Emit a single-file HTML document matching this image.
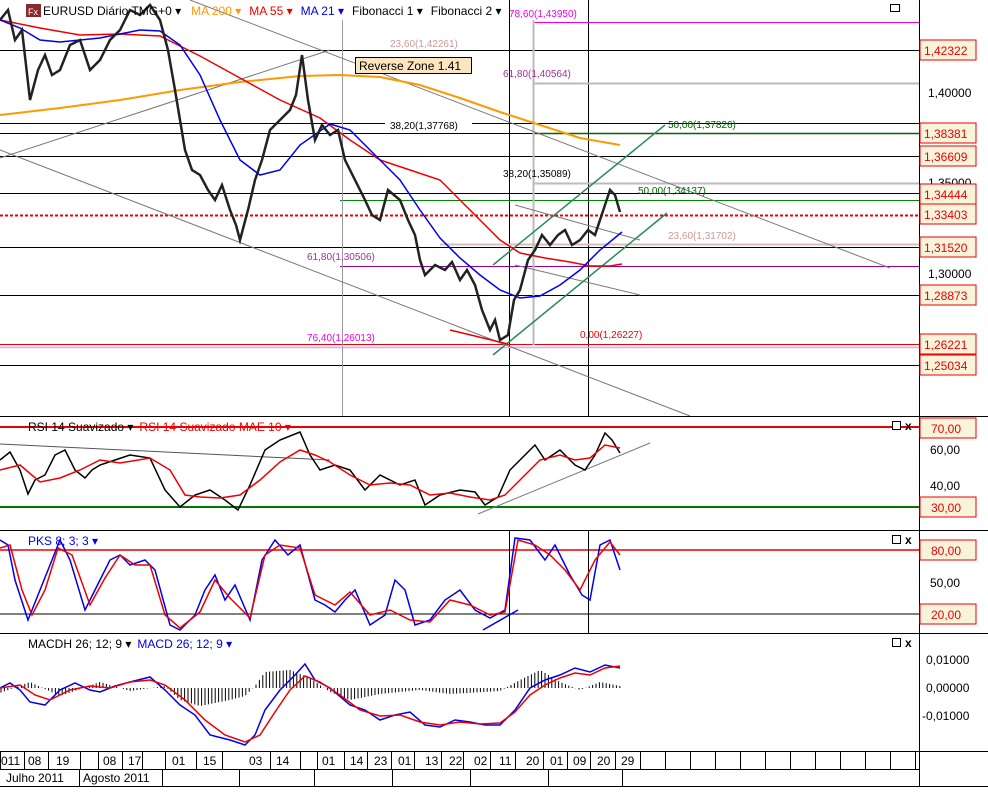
<!DOCTYPE html>
<html><head><meta charset="utf-8">
<style>
html,body{margin:0;padding:0;background:#fff;}
body{width:988px;height:787px;overflow:hidden;font-family:"Liberation Sans",sans-serif;}
svg text{font-family:"Liberation Sans",sans-serif;}
</style></head><body>
<svg id="s" width="988" height="787" viewBox="0 0 988 787" xmlns="http://www.w3.org/2000/svg" font-size="11">
<rect width="988" height="787" fill="#fff"/>
<g stroke="#000" stroke-width="1">
<line x1="0" y1="50.5" x2="919" y2="50.5"/>
<line x1="0" y1="133.5" x2="919" y2="133.5"/>
<line x1="0" y1="156.5" x2="919" y2="156.5"/>
<line x1="0" y1="193.5" x2="919" y2="193.5"/>
<line x1="0" y1="247.5" x2="919" y2="247.5"/>
<line x1="0" y1="295.5" x2="919" y2="295.5"/>
<line x1="0" y1="365.5" x2="919" y2="365.5"/>
<line x1="0" y1="123.5" x2="385" y2="123.5"/>
<line x1="472" y1="123.5" x2="919" y2="123.5"/>
<line x1="509.5" y1="0" x2="509.5" y2="416"/>
<line x1="588.5" y1="0" x2="588.5" y2="416"/>
</g>
<line x1="0" y1="344.5" x2="919" y2="344.5" stroke="#e00" stroke-width="1"/>
<line x1="0" y1="215.5" x2="919" y2="215.5" stroke="#e00" stroke-width="2" stroke-dasharray="3,2"/>
<line x1="533" y1="22.5" x2="919" y2="22.5" stroke="#e0e"/>
<line x1="533" y1="83.5" x2="919" y2="83.5" stroke="#bbb" stroke-width="2"/>
<line x1="533" y1="183.5" x2="919" y2="183.5" stroke="#bbb" stroke-width="2"/>
<line x1="340" y1="200.5" x2="919" y2="200.5" stroke="#080"/>
<line x1="533" y1="133.5" x2="919" y2="133.5" stroke="#060" stroke-width="1.5"/>
<line x1="440" y1="244.5" x2="919" y2="244.5" stroke="#dbb" stroke-width="2"/>
<line x1="340" y1="266.5" x2="919" y2="266.5" stroke="#909"/>
<line x1="0" y1="347.5" x2="919" y2="347.5" stroke="#f9f" stroke-width="1.5"/>
<line x1="342.5" y1="20" x2="342.5" y2="416" stroke="#999"/>
<line x1="533.5" y1="20" x2="533.5" y2="345" stroke="#bbb" stroke-width="2"/>
<g stroke="#777" stroke-width="1" fill="none">
<line x1="0" y1="158" x2="330" y2="50"/>
<line x1="190" y1="0" x2="890" y2="268"/>
<line x1="0" y1="150" x2="690" y2="416"/>
<line x1="515" y1="205" x2="640" y2="240"/>
<line x1="515" y1="265" x2="640" y2="295"/>
</g>
<g stroke="#2a8a5a" stroke-width="1.5">
<line x1="493" y1="265" x2="665" y2="125"/>
<line x1="493" y1="355" x2="667" y2="213"/>
</g>
<polyline fill="none" stroke="#f90" stroke-width="2" points="0,115 60,108 120,100 180,90 240,82 300,76 340,75 380,77 420,85 460,98 500,112 540,125 580,138 620,145"/>
<polyline fill="none" stroke="#e00" stroke-width="1.5" points="0,20 40,28 80,35 120,34 160,36 200,56 240,78 280,100 320,118 350,140 380,160 410,170 440,180 470,210 500,240 520,253 545,258 570,262 590,266 610,266 622,264"/>
<polyline fill="none" stroke="#00e" stroke-width="1.5" points="0,20 20,28 40,40 60,42 100,38 120,34 140,30 160,31 180,45 200,75 220,120 240,160 260,175 280,170 300,145 330,124 350,130 370,150 400,180 420,210 440,238 460,258 480,275 500,290 520,298 540,296 560,285 580,270 600,250 622,232"/>
<polyline fill="none" stroke="#222" stroke-width="2.5" points="0,20 8,10 15,40 22,30 30,100 38,70 45,55 52,75 60,70 70,45 80,40 90,70 100,60 110,40 120,30 130,10 140,15 150,5 160,20 168,50 175,90 180,120 185,150 192,170 200,175 208,190 215,200 222,185 230,210 236,225 240,240 248,210 255,180 262,160 270,130 280,120 290,110 296,95 302,55 308,100 315,140 322,125 330,135 338,130 345,160 355,180 365,200 372,215 380,220 388,190 400,200 408,220 415,235 420,260 425,275 435,265 445,270 452,262 460,280 467,270 475,285 482,310 490,330 495,320 500,340 508,335 514,300 520,290 528,260 535,250 542,235 550,245 558,235 565,230 572,245 580,240 588,230 595,235 600,220 605,205 610,190 615,195 620,212"/>
<line x1="450" y1="330" x2="508" y2="344" stroke="#e00" stroke-width="1.5"/>
<g font-size="10">
<text x="509" y="17" fill="#e0e">78,60(1,43950)</text>
<text x="390" y="47" fill="#c99">23,60(1,42261)</text>
<text x="503" y="77" fill="#939">61,80(1,40564)</text>
<text x="390" y="129" fill="#000">38,20(1,37768)</text>
<text x="668" y="128" fill="#060">50,00(1,37826)</text>
<text x="503" y="177" fill="#000">38,20(1,35089)</text>
<text x="638" y="194" fill="#060">50,00(1,34137)</text>
<text x="668" y="239" fill="#c99">23,60(1,31702)</text>
<text x="307" y="260" fill="#939">61,80(1,30506)</text>
<text x="307" y="341" fill="#e0e">76,40(1,26013)</text>
<text x="580" y="338" fill="#e00">0,00(1,26227)</text>
</g>
<rect x="355.5" y="57.5" width="116" height="16" fill="#fde5c0" stroke="#000"/>
<text x="359" y="70" font-size="12">Reverse Zone 1.41</text>
<rect x="26" y="4" width="15" height="13" fill="#8a2a2a"/>
<text x="28" y="15" font-size="9" fill="#fff">Fx</text>
<text x="43" y="15" font-size="12"><tspan fill="#000">EURUSD Diário TMG+0 ▾</tspan><tspan dx="10" fill="#f90">MA 200 ▾</tspan><tspan dx="8" fill="#e00">MA 55 ▾</tspan><tspan dx="8" fill="#00e">MA 21 ▾</tspan><tspan dx="8" fill="#000">Fibonacci 1 ▾</tspan><tspan dx="8" fill="#000">Fibonacci 2 ▾</tspan></text>
<rect x="890.5" y="4.5" width="9" height="7" fill="#fff" stroke="#000"/>
<g stroke="#000">
<line x1="0" y1="416.5" x2="988" y2="416.5"/>
<line x1="0" y1="530.5" x2="988" y2="530.5"/>
<line x1="0" y1="633.5" x2="988" y2="633.5"/>
<line x1="0" y1="751.5" x2="988" y2="751.5"/>
<line x1="0" y1="769.5" x2="919" y2="769.5"/>
<line x1="0" y1="786.5" x2="988" y2="786.5"/>
<line x1="919.5" y1="0" x2="919.5" y2="787"/>
</g>
<line x1="0" y1="427" x2="919" y2="427" stroke="#e00" stroke-width="2"/>
<line x1="0" y1="507" x2="919" y2="507" stroke="#070" stroke-width="2"/>
<line x1="0" y1="444" x2="330" y2="460" stroke="#555"/>
<line x1="478" y1="514" x2="650" y2="443" stroke="#777"/>
<polyline fill="none" stroke="#000" stroke-width="1.5" points="0,460 10,452 20,470 28,494 35,480 45,475 55,455 65,450 75,470 85,478 92,470 100,465 115,460 130,455 150,458 165,490 180,507 195,495 210,490 225,500 238,510 250,485 265,450 280,440 300,432 310,455 320,470 335,465 350,470 365,490 380,475 400,485 415,480 425,505 440,495 460,490 475,492 485,505 498,497 510,470 525,455 535,445 545,460 560,450 575,465 585,470 595,455 605,433 612,440 620,453"/>
<polyline fill="none" stroke="#e00" stroke-width="1.5" points="0,470 20,465 40,482 60,478 80,470 100,460 120,463 150,458 170,470 185,495 200,497 220,498 240,495 260,480 280,462 300,450 315,455 330,462 350,475 370,485 390,483 410,485 430,495 450,493 470,497 490,500 505,495 520,480 540,460 560,455 575,460 590,458 605,445 620,448"/>
<text x="28" y="431" font-size="12"><tspan fill="#000">RSI 14 Suavizado ▾</tspan><tspan dx="6" fill="#e00">RSI 14 Suavizado MAE 10 ▾</tspan></text>
<line x1="0" y1="550" x2="919" y2="550" stroke="#e00" stroke-width="1.5"/>
<line x1="0" y1="614" x2="919" y2="614" stroke="#000"/>
<line x1="509.5" y1="530" x2="509.5" y2="633" stroke="#000"/>
<line x1="588.5" y1="530" x2="588.5" y2="633" stroke="#000"/>
<line x1="483" y1="630" x2="518" y2="610" stroke="#00e" stroke-width="1.5"/>
<polyline fill="none" stroke="#00e" stroke-width="1.5" points="0,540 8,545 15,580 28,620 40,590 50,565 60,540 70,560 85,610 100,580 110,560 120,555 130,565 145,560 155,570 170,625 180,630 195,615 205,590 215,575 225,600 235,585 250,620 262,560 275,540 288,555 300,545 315,600 325,605 335,612 345,600 355,590 370,625 385,615 395,580 405,590 415,625 430,620 445,600 460,590 475,610 490,618 505,610 515,538 530,540 545,560 555,545 570,575 582,595 590,600 600,545 610,540 620,570"/>
<polyline fill="none" stroke="#e00" stroke-width="1.5" points="0,548 10,545 22,590 32,615 45,590 58,548 72,555 90,605 105,578 120,555 135,565 150,565 165,615 180,628 200,612 215,580 230,598 250,618 265,555 280,545 300,548 315,595 335,605 350,592 370,615 390,610 410,620 430,622 450,600 470,605 490,615 505,612 518,540 535,545 550,555 565,570 580,590 595,560 610,542 620,555"/>
<text x="28" y="545" font-size="12" fill="#00e">PKS 8; 3; 3 ▾</text>
<g id="hist" stroke="#000"></g>
<polyline fill="none" stroke="#00e" stroke-width="1.5" points="0,688 10,683 20,690 30,702 45,705 60,690 75,683 90,690 100,692 115,686 130,682 150,677 165,690 180,705 195,715 210,735 230,740 245,745 255,735 265,710 280,690 295,675 305,664 315,680 330,688 350,705 365,710 380,720 395,715 410,712 425,725 440,727 455,720 470,722 485,725 500,725 515,710 530,688 545,680 560,675 575,668 590,672 605,665 620,668"/>
<polyline fill="none" stroke="#e00" stroke-width="1.5" points="0,688 20,685 35,695 50,700 70,690 90,686 110,688 130,682 150,680 165,685 185,700 205,720 225,735 245,742 260,735 275,712 290,690 305,676 320,682 340,695 360,710 380,716 400,715 420,722 440,725 460,722 480,724 500,723 515,712 530,695 545,685 560,678 575,673 590,675 605,668 620,666"/>
<text x="28" y="648" font-size="12"><tspan fill="#000">MACDH 26; 12; 9 ▾</tspan><tspan dx="6" fill="#00e">MACD 26; 12; 9 ▾</tspan></text>
<g fill="#fff" stroke="#000"><rect x="892.5" y="421.5" width="8" height="8"/><rect x="892.5" y="535.5" width="8" height="8"/><rect x="892.5" y="638.5" width="8" height="8"/></g>
<g font-size="12" font-weight="bold"><text x="905" y="430">x</text><text x="905" y="544">x</text><text x="905" y="647">x</text></g>
<g font-size="12" fill="#000">
<text x="928" y="97">1,40000</text><text x="928" y="187">1,35000</text><text x="928" y="278">1,30000</text>
<text x="930" y="454">60,00</text><text x="930" y="490">40,00</text><text x="930" y="587">50,00</text>
<text x="926" y="664">0,01000</text><text x="926" y="692">0,00000</text><text x="922" y="720">-0,01000</text>
</g>
<g id="boxes" font-size="12"></g>
<g font-size="12" fill="#000" id="dates"></g>
<text x="6" y="782" font-size="12">Julho 2011</text>
<text x="83" y="782" font-size="12">Agosto 2011</text>
<g stroke="#000"><line x1="79.5" y1="769" x2="79.5" y2="787"/><line x1="162.5" y1="769" x2="162.5" y2="787"/><line x1="239.5" y1="769" x2="239.5" y2="787"/><line x1="314.5" y1="769" x2="314.5" y2="787"/><line x1="392.5" y1="769" x2="392.5" y2="787"/><line x1="470.5" y1="769" x2="470.5" y2="787"/><line x1="548.5" y1="769" x2="548.5" y2="787"/><line x1="622.5" y1="769" x2="622.5" y2="787"/></g>
</svg>
<script>
var NS="http://www.w3.org/2000/svg";
function el(p,t,a,txt){var e=document.createElementNS(NS,t);for(var k in a)e.setAttribute(k,a[k]);if(txt)e.textContent=txt;p.appendChild(e);return e;}
var h=document.getElementById('hist');var hv=[[0,-5],[30,6],[60,-8],[100,6],[130,-3],[165,2],[180,-12],[200,-18],[230,-12],[245,-8],[255,2],[265,16],[290,18],[310,10],[330,-4],[350,-12],[380,-6],[420,-2],[450,-6],[500,-3],[520,8],[540,18],[560,6],[580,-2],[600,6],[620,2]];
function hAt(x){for(var i=0;i<hv.length-1;i++)if(x>=hv[i][0]&&x<=hv[i+1][0]){var t=(x-hv[i][0])/(hv[i+1][0]-hv[i][0]);return hv[i][1]+t*(hv[i+1][1]-hv[i][1]);}return 0;}
for(var x=1;x<=620;x+=3.4){var v=hAt(x);el(h,'line',{x1:x,x2:x,y1:688,y2:688-v});}
var bx=[[50,'1,42322'],[133,'1,38381'],[156,'1,36609'],[194,'1,34444'],[214,'1,33403'],[247,'1,31520'],[295,'1,28873'],[344,'1,26221'],[365,'1,25034'],[428,'70,00'],[507,'30,00'],[550,'80,00'],[614,'20,00']];
var bg=document.getElementById('boxes');
bx.forEach(function(b){el(bg,'rect',{x:920,y:b[0]-10,width:56,height:20,fill:'#f8f4dc',stroke:'#e00'});el(bg,'text',{x:b[1].length>5?924:931,y:b[0]+5,fill:'#e00'},b[1]);});
var d=[[1,'011'],[28,'08'],[56,'19'],[103,'08'],[128,'17'],[172,'01'],[203,'15'],[249,'03'],[276,'14'],[322,'01'],[350,'14'],[374,'23'],[398,'01'],[425,'13'],[449,'22'],[474,'02'],[499,'11'],[526,'20'],[550,'01'],[573,'09'],[597,'20'],[621,'29']];
var dg=document.getElementById('dates');
d.forEach(function(q){el(dg,'text',{x:q[0],y:765},q[1]);});
var sep=[0,24,48,80,98,122,142,165,196,222,270,300,317,344,367,391,414,441,463,490,515,543,567,590,615,640,665,690,715,740,765,790,815,840,865,890,915];
sep.forEach(function(x){el(dg,'line',{x1:x+0.5,x2:x+0.5,y1:752,y2:769,stroke:'#000'});});
</script>
</body></html>
